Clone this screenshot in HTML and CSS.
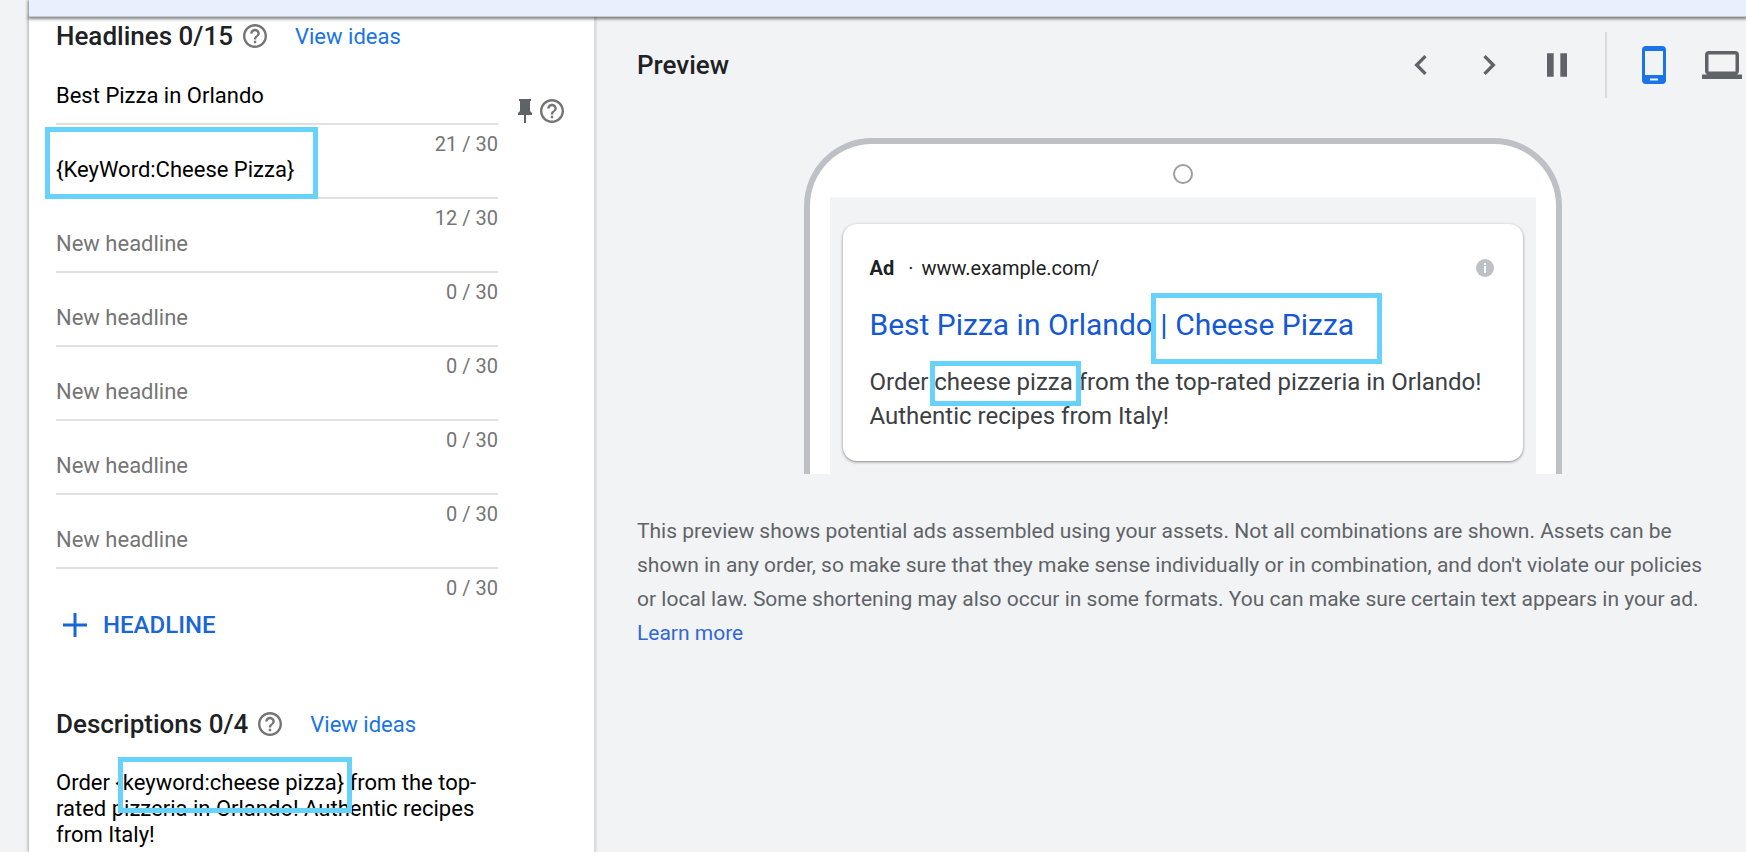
FILE: index.html
```html
<!DOCTYPE html>
<html lang="en">

<head>
    <meta charset="utf-8">
    <title>Responsive search ad</title>
    <link rel="stylesheet" href="styles.css">
</head>

<body>
    <svg class="sprite">
        <symbol id="help" viewBox="2 2 20 20">
            <path d="M11 18h2v-2h-2v2zm1-16C6.480 2 2 6.480 2 12s4.480 10 10 10 10-4.480 10-10S17.520 2 12 2zm0 18c-4.410 0-8-3.590-8-8s3.590-8 8-8 8 3.590 8 8-3.590 8-8 8zm0-14c-2.210 0-4 1.790-4 4h2c0-1.100.9-2 2-2s2 .9 2 2c0 2-3 1.750-3 5h2c0-2.250 3-2.500 3-5 0-2.210-1.790-4-4-4z"/>
        </symbol>
    </svg>

    <div class="topbar"></div>
    <main class="page">
        <section class="editor">
            <div class="section-title">
                <h2>Headlines 0/15</h2>
                <button class="icon-button" aria-label="Headlines help"><svg class="help"><use href="#help"/></svg></button>
                <a href="#">View ideas</a>
            </div>

            <div class="field-row">
                <div class="field">
                    <input type="text" aria-label="Headline 1" placeholder="New headline" value="Best Pizza in Orlando">
                    <span class="counter">21 / 30</span>
                </div>
                <div class="pin">
                    <button class="icon-button" aria-label="Pin headline">
                        <svg class="pin-icon" viewBox="0 0 14 24"><path d="M1 0h12v2h-1v10l2 2v2H8v8H6v-8H0v-2l2-2V2H1z"/></svg>
                    </button>
                    <button class="icon-button" aria-label="Pin help"><svg class="help"><use href="#help"/></svg></button>
                </div>
            </div>
            <div class="field">
                <input type="text" aria-label="Headline 2" placeholder="New headline" value="{KeyWord:Cheese Pizza}">
                <span class="counter">12 / 30</span>
                <span class="mark mark-field"></span>
            </div>
            <div class="field">
                <input type="text" aria-label="Headline 3" placeholder="New headline">
                <span class="counter">0 / 30</span>
            </div>
            <div class="field">
                <input type="text" aria-label="Headline 4" placeholder="New headline">
                <span class="counter">0 / 30</span>
            </div>
            <div class="field">
                <input type="text" aria-label="Headline 5" placeholder="New headline">
                <span class="counter">0 / 30</span>
            </div>
            <div class="field">
                <input type="text" aria-label="Headline 6" placeholder="New headline">
                <span class="counter">0 / 30</span>
            </div>
            <div class="field">
                <input type="text" aria-label="Headline 7" placeholder="New headline">
                <span class="counter">0 / 30</span>
            </div>

            <button class="add">
                <svg viewBox="0 0 24 24"><path d="M10.500 0h3v10.500H24v3H13.500V24h-3V13.500H0v-3h10.500z"/></svg>
                HEADLINE
            </button>

            <div class="section-title">
                <h2>Descriptions 0/4</h2>
                <button class="icon-button" aria-label="Descriptions help"><svg class="help"><use href="#help"/></svg></button>
                <a href="#">View ideas</a>
            </div>
            <div class="description">
                <textarea rows="3" aria-label="Description 1">Order {keyword:cheese pizza} from the top-rated pizzeria in Orlando! Authentic recipes from Italy!</textarea>
                <span class="mark mark-description"></span>
            </div>
        </section>

        <section class="preview">
            <div class="preview-bar">
                <h2>Preview</h2>
                <div class="controls">
                    <button class="icon-button" aria-label="Previous ad">
                        <svg class="control" viewBox="0 0 24 24"><path d="M15.410 7.410L14 6l-6 6 6 6 1.410-1.410L10.830 12z"/></svg>
                    </button>
                    <button class="icon-button" aria-label="Next ad">
                        <svg class="control" viewBox="0 0 24 24"><path d="M10 6L8.590 7.410 13.170 12l-4.580 4.590L10 18l6-6z"/></svg>
                    </button>
                    <button class="icon-button" aria-label="Pause">
                        <svg class="control" viewBox="0 0 24 24"><path d="M6 19h4V5H6v14zm8-14v14h4V5h-4z"/></svg>
                    </button>
                </div>
                <div class="devices">
                    <button class="icon-button active" aria-label="Mobile">
                        <svg class="control" viewBox="0 0 40 40"><path fill-rule="evenodd" d="M12 1h16a4 4 0 0 1 4 4v30a4 4 0 0 1-4 4H12a4 4 0 0 1-4-4V5a4 4 0 0 1 4-4zm-1 5v24h18V6zm5 27.500v2h8v-2z"/></svg>
                    </button>
                    <button class="icon-button" aria-label="Desktop">
                        <svg class="control" viewBox="0 0 40 40"><path fill-rule="evenodd" d="M7 6h26a4 4 0 0 1 4 4v16a4 4 0 0 1-2 3.500h5V34H0v-4.500h5A4 4 0 0 1 3 26V10a4 4 0 0 1 4-4zm-.500 3.500v17h27v-17z"/></svg>
                    </button>
                </div>
            </div>

            <div class="phone">
                <div class="camera"></div>
                <div class="screen">
                    <article class="ad">
                        <div class="ad-top">
                            <b>Ad</b>
                            <span class="dot">·</span>
                            <span>www.example.com/</span>
                            <svg class="info" viewBox="0 0 18 18"><circle cx="9" cy="9" r="9"/><path fill="#fff" d="M8 4h2v2H8zM8 7h2v7H8z"/></svg>
                        </div>
                        <h3><a href="#">Best Pizza in Orlando <span class="marked">| Cheese Pizza<span class="mark mark-title"></span></span></a></h3>
                        <p>Order <span class="marked">cheese pizza<span class="mark mark-text"></span></span> from the top-rated pizzeria in Orlando! Authentic recipes from Italy!</p>
                    </article>
                </div>
            </div>

            <p class="note">This preview shows potential ads assembled using your assets. Not all combinations are shown. Assets can be shown in any order, so make sure that they make sense individually or in combination, and don't violate our policies or local law. Some shortening may also occur in some formats. You can make sure certain text appears in your ad. <a href="#">Learn more</a></p>
        </section>
    </main>
</body>

</html>
```

FILE: styles.css
```css
* {
    box-sizing: border-box;
}

body {
    margin: 0;
    min-height: 100vh;
    display: flex;
    flex-direction: column;
    background-color: #f1f3f4;
    color: #202124;
    font-family: Roboto, sans-serif;
    font-size: 22px;
}

h2, h3, p {
    margin: 0;
}

h2 {
    font-size: 26px;
    line-height: 38px;
    font-weight: 500;
}

a {
    color: #1a73e8;
    text-decoration: none;
}

button, input, textarea {
    font: inherit;
    border: none;
    background: none;
    padding: 0;
    margin: 0;
    outline: none;
}

button {
    cursor: pointer;
}

svg {
    display: block;
    fill: currentColor;
}

.sprite {
    position: absolute;
    width: 0;
    height: 0;
}

.topbar {
    height: 17px;
    margin-left: 29px;
    background-color: #e8f0fe;
    border-bottom: 1px solid #c4c8d0;
    box-shadow: 0 1px 3px 1px rgba(0, 0, 0, 0.5);
    z-index: 1;
}

.page {
    flex: 1;
    display: grid;
    grid-template-columns: 567px 1fr;
    margin-left: 29px;
}

/* left column */
.editor {
    padding-left: 27px;
    background-color: white;
    border-right: 2px solid #dadce0;
    box-shadow: -1px 0 3px rgba(60, 64, 67, 0.4);
}

.section-title {
    display: flex;
    align-items: center;
    margin-bottom: 27px;
}

.section-title a {
    margin-left: 28px;
}

.icon-button {
    color: #5f6368;
}

.help {
    width: 24px;
    height: 24px;
    color: #757575;
}

.section-title .icon-button {
    margin-left: 10px;
}

.field-row {
    display: flex;
    gap: 20px;
}

.field {
    position: relative;
    width: 442px;
}

.field input {
    display: block;
    width: 100%;
    height: 43px;
    padding-bottom: 15px;
    border-bottom: 2px solid #e0e0e0;
    color: black;
}

.field input::placeholder {
    color: #757575;
    opacity: 1;
}

.counter {
    display: block;
    padding-top: 7px;
    font-size: 20px;
    line-height: 24px;
    text-align: right;
    color: #757575;
}

.pin {
    display: flex;
    align-items: center;
    gap: 8px;
    height: 58px;
}

.pin-icon {
    width: 14px;
    height: 24px;
}

.add {
    display: flex;
    align-items: center;
    gap: 16px;
    height: 50px;
    margin-bottom: 55px;
    padding-left: 7px;
    font-size: 24px;
    font-weight: 500;
    color: #1967d2;
}

.add svg {
    width: 24px;
    height: 24px;
}

.description {
    position: relative;
    width: 442px;
}

.description textarea {
    display: block;
    width: 100%;
    line-height: 26px;
    color: black;
    resize: none;
    overflow: hidden;
}

/* highlight frames */
.mark {
    position: absolute;
    border: 5px solid #67d3fb;
    pointer-events: none;
}

.marked {
    position: relative;
}

.mark-field {
    left: -11px;
    top: -29px;
    width: 273px;
    height: 72px;
}

.mark-description {
    left: 62px;
    top: -13px;
    width: 234px;
    height: 56px;
}

.mark-title {
    left: -9px;
    right: -28px;
    top: -14px;
    height: 71px;
}

.mark-text {
    left: -4px;
    right: -8px;
    top: -7px;
    height: 45px;
}

/* right column */
.preview {
    padding: 15px 18px 0 41px;
}

.preview-bar {
    display: flex;
    align-items: center;
    height: 66px;
    margin-right: -14px;
}

.controls {
    display: flex;
    gap: 28px;
    margin-left: auto;
    padding-right: 28px;
}

.devices {
    display: flex;
    align-items: center;
    gap: 28px;
    height: 100%;
    padding-left: 27px;
    border-left: 2px solid #dadce0;
}

.control {
    width: 40px;
    height: 40px;
}

.active {
    color: #1a73e8;
}

.phone {
    max-width: 758px;
    margin: 40px auto;
    padding: 0 20px;
    background-color: white;
    border: 6px solid #bdc1c6;
    border-bottom: none;
    border-radius: 68px 68px 0 0;
}

.camera {
    width: 20px;
    height: 20px;
    margin: 0 auto;
    border: 2px solid #9e9e9e;
    border-radius: 50%;
}

.phone .camera {
    margin-top: 20px;
    margin-bottom: 13px;
}

.screen {
    padding: 27px 13px 13px;
    background-color: #f1f3f4;
}

.ad {
    padding: 28px 27px;
    background-color: white;
    border-radius: 14px;
    box-shadow: 0 1px 3px rgba(60, 64, 67, 0.6);
}

.ad-top {
    display: flex;
    align-items: center;
    font-size: 20px;
    line-height: 32px;
}

.dot {
    margin: 0 8px 0 14px;
}

.info {
    width: 18px;
    height: 18px;
    margin-left: auto;
    margin-right: 2px;
    color: #bdc1c6;
}

.ad h3 {
    margin: 21px 0 20px;
    font-size: 30px;
    line-height: 40px;
    font-weight: 400;
}

.ad h3 a {
    color: #1558d6;
}

.ad p {
    font-size: 24px;
    line-height: 34px;
    color: #3c4043;
}

.note {
    max-width: 1074px;
    font-size: 21px;
    line-height: 34px;
    color: #5f6368;
}

.note a {
    color: #3367d6;
}
```
